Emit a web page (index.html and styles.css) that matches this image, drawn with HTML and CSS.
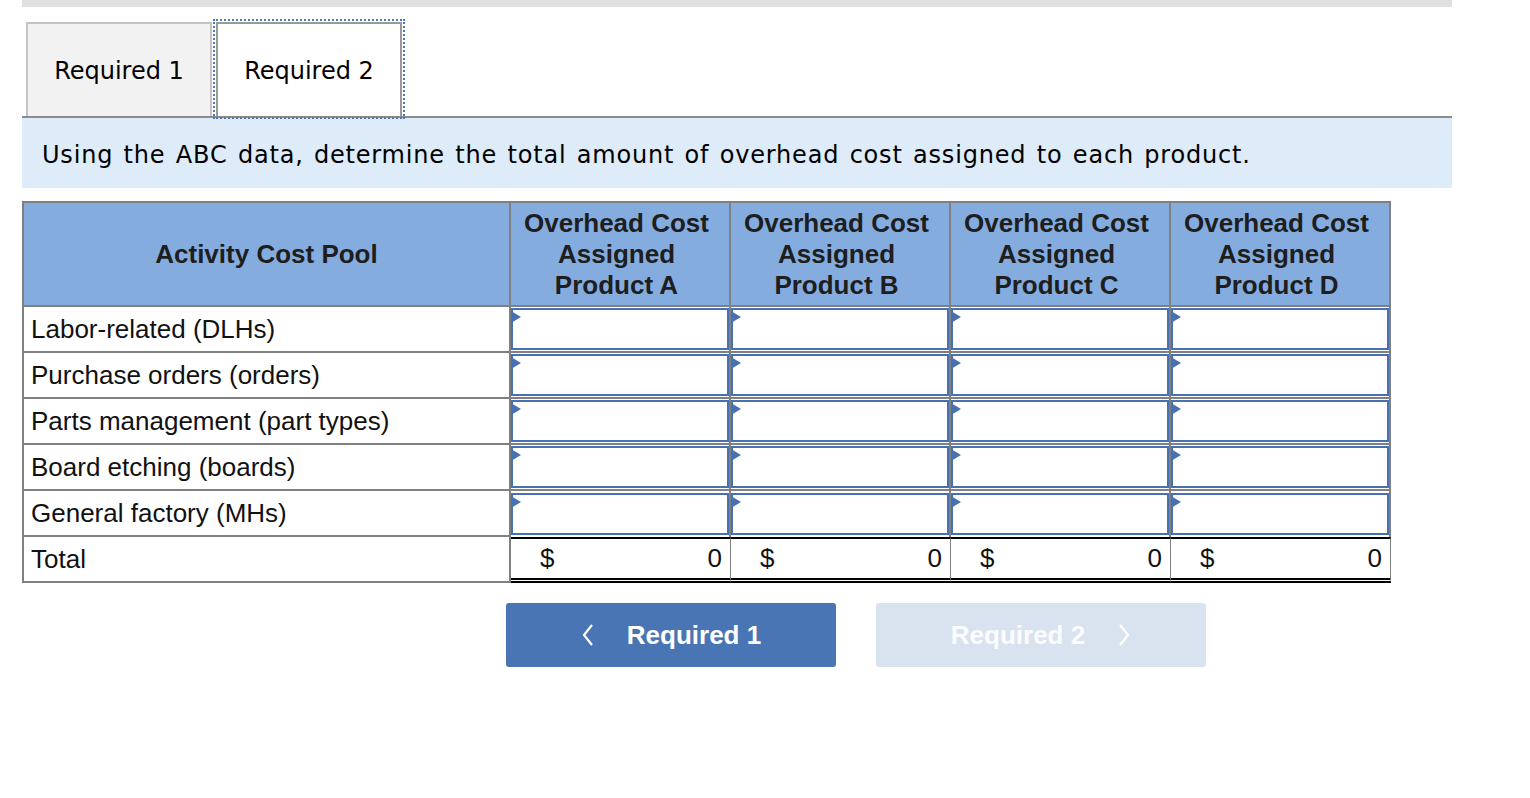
FILE: index.html
```html
<!DOCTYPE html>
<html lang="en">
<head>
<meta charset="utf-8">
<title>Required 2</title>
<link rel="stylesheet" href="styles.css">
</head>
<body>
<div class="page">
  <div class="topbar"></div>
  <div class="tabs">
    <div class="tab">Required 1</div>
    <div class="tab active">Required 2</div>
  </div>
  <div class="instruction">Using the ABC data, determine the total amount of overhead cost assigned to each product.</div>
  <table class="grid">
    <colgroup>
      <col class="c-pool">
      <col class="c-prod"><col class="c-prod"><col class="c-prod"><col class="c-prod">
    </colgroup>
    <thead>
      <tr>
        <th>Activity Cost Pool</th>
        <th class="prod">Overhead Cost<br>Assigned<br>Product A</th>
        <th class="prod">Overhead Cost<br>Assigned<br>Product B</th>
        <th class="prod">Overhead Cost<br>Assigned<br>Product C</th>
        <th class="prod">Overhead Cost<br>Assigned<br>Product D</th>
      </tr>
    </thead>
    <tbody>
      <tr>
        <td class="label">Labor-related (DLHs)</td>
        <td class="in"><div class="inp"></div></td><td class="in"><div class="inp"></div></td><td class="in"><div class="inp"></div></td><td class="in"><div class="inp"></div></td>
      </tr>
      <tr>
        <td class="label">Purchase orders (orders)</td>
        <td class="in"><div class="inp"></div></td><td class="in"><div class="inp"></div></td><td class="in"><div class="inp"></div></td><td class="in"><div class="inp"></div></td>
      </tr>
      <tr>
        <td class="label">Parts management (part types)</td>
        <td class="in"><div class="inp"></div></td><td class="in"><div class="inp"></div></td><td class="in"><div class="inp"></div></td><td class="in"><div class="inp"></div></td>
      </tr>
      <tr>
        <td class="label">Board etching (boards)</td>
        <td class="in"><div class="inp"></div></td><td class="in"><div class="inp"></div></td><td class="in"><div class="inp"></div></td><td class="in"><div class="inp"></div></td>
      </tr>
      <tr>
        <td class="label">General factory (MHs)</td>
        <td class="in"><div class="inp"></div></td><td class="in"><div class="inp"></div></td><td class="in"><div class="inp"></div></td><td class="in"><div class="inp"></div></td>
      </tr>
      <tr class="total">
        <td class="label">Total</td>
        <td class="sum"><div class="sumbox"><span>$</span><span>0</span></div></td>
        <td class="sum"><div class="sumbox"><span>$</span><span>0</span></div></td>
        <td class="sum"><div class="sumbox"><span>$</span><span>0</span></div></td>
        <td class="sum"><div class="sumbox"><span>$</span><span>0</span></div></td>
      </tr>
    </tbody>
  </table>
  <div class="nav">
    <button class="btn prev"><svg class="chev" width="14" height="24" viewBox="0 0 14 24"><path d="M11 2 L3 12 L11 22" fill="none" stroke="#fff" stroke-width="2.2"/></svg><span>Required 1</span></button>
    <button class="btn next"><span>Required 2</span><svg class="chev" width="14" height="24" viewBox="0 0 14 24"><path d="M3 2 L11 12 L3 22" fill="none" stroke="#fff" stroke-width="2.2"/></svg></button>
  </div>
</div>
</body>
</html>
```

FILE: styles.css
```css
html, body {
  margin: 0;
  padding: 0;
  background: #fff;
}

.page {
  padding-left: 22px;
  width: 1430px;
  color: #111;
}

.topbar {
  height: 7px;
  background: #e0e0e0;
}

.tabs {
  display: flex;
  padding-left: 4px;
  margin-top: 15px;
  border-bottom: 2px solid #8c8c8c;
  font-family: "DejaVu Sans", Verdana, sans-serif;
  font-size: 24px;
}

.tab {
  width: 182px;
  height: 90px;
  border: 2px solid #c4c4c4;
  border-bottom: none;
  background: #f2f2f2;
  display: flex;
  align-items: center;
  justify-content: center;
  color: #000;
  padding-top: 2px;
}

.tab.active {
  background: #fff;
  margin-left: 4px;
  border-color: #9a9a9a;
  outline: 2px dotted #4a78c2;
  outline-offset: 1px;
  position: relative;
  z-index: 1;
}

.instruction {
  background: #deebf8;
  height: 66px;
  padding: 4px 0 0 20px;
  display: flex;
  align-items: center;
  font-family: "DejaVu Sans", Verdana, sans-serif;
  font-size: 24px;
  letter-spacing: 0.8px;
  word-spacing: 2px;
  color: #000;
}

.grid {
  margin-top: 13px;
  border-spacing: 0;
  table-layout: fixed;
  width: 1368px;
  font-family: "Liberation Sans", Arial, sans-serif;
  font-size: 26px;
  line-height: 31px;
  border-top: 2px solid #808080;
  border-left: 2px solid #808080;
}

.c-pool { width: 487px; }
.c-prod { width: 220px; }

.grid th {
  background: #84acdf;
  font-weight: bold;
  color: #1e1e1e;
  height: 102px;
  padding: 0;
  text-align: center;
  vertical-align: middle;
  border-right: 2px solid #808080;
  border-bottom: 2px solid #808080;
}

.grid th.prod {
  padding-right: 7px;
}

.grid td {
  padding: 0;
  height: 44px;
  border-right: 2px solid #808080;
  border-bottom: 2px solid #808080;
  vertical-align: middle;
}

.grid td.label {
  padding-left: 7px;
  color: #111;
}

.inp {
  position: relative;
  box-sizing: border-box;
  height: 42px;
  margin: 1px 0;
  border: 2px solid #4672b3;
  background: #fff;
}

.inp::before {
  content: "";
  position: absolute;
  left: -2px;
  top: 1px;
  width: 0;
  height: 0;
  border-left: 10px solid #4672b3;
  border-top: 6px solid transparent;
  border-bottom: 6px solid transparent;
}

.total td.sum {
  border-right: 1px solid #808080;
  border-bottom: 5px double #000;
  border-top: 2px solid #000;
  height: 37px;
}

.grid tr:nth-child(5) td.in {
  border-bottom-width: 0;
}

.sumbox {
  display: flex;
  justify-content: space-between;
  padding: 0 8px 0 29px;
}

.nav {
  display: flex;
  gap: 40px;
  margin-top: 20px;
  padding-left: 484px;
}

.btn {
  width: 330px;
  height: 64px;
  border: none;
  border-radius: 3px;
  display: flex;
  align-items: center;
  justify-content: center;
  gap: 32px;
  font-family: "Liberation Sans", Arial, sans-serif;
  font-weight: bold;
  font-size: 26px;
  color: #fff;
  padding: 0;
}

.btn.prev {
  background: #4a75b4;
}

.btn.next {
  background: #d9e3f0;
  color: #fbfcfe;
}

.chev {
  display: block;
}
```
